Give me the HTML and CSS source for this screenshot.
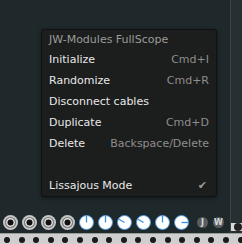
FILE: index.html
```html
<!DOCTYPE html>
<html lang="en">
<head>
  <meta charset="UTF-8" />
  <title>FullScope</title>
  <link rel="stylesheet" href="styles.css">
</head>
<body>
  <div class="rack">
    <div class="row">
      <div class="module">
        <div class="controls">
          <svg class="jack" viewBox="0 0 15 15"><circle cx="7.5" cy="7.5" r="7.5" fill="#c6c6c6"/><circle cx="7.5" cy="7.5" r="5.6" fill="#7c7c7c"/><circle cx="7.5" cy="7.5" r="4.4" fill="#e2e2e2"/><circle cx="7.5" cy="7.5" r="3" fill="#111"/></svg>
          <svg class="jack" viewBox="0 0 15 15"><circle cx="7.5" cy="7.5" r="7.5" fill="#c6c6c6"/><circle cx="7.5" cy="7.5" r="5.6" fill="#7c7c7c"/><circle cx="7.5" cy="7.5" r="4.4" fill="#e2e2e2"/><circle cx="7.5" cy="7.5" r="3" fill="#111"/></svg>
          <svg class="jack" viewBox="0 0 15 15"><circle cx="7.5" cy="7.5" r="7.5" fill="#c6c6c6"/><circle cx="7.5" cy="7.5" r="5.6" fill="#7c7c7c"/><circle cx="7.5" cy="7.5" r="4.4" fill="#e2e2e2"/><circle cx="7.5" cy="7.5" r="3" fill="#111"/></svg>
          <svg class="jack" viewBox="0 0 15 15"><circle cx="7.5" cy="7.5" r="7.5" fill="#c6c6c6"/><circle cx="7.5" cy="7.5" r="5.6" fill="#7c7c7c"/><circle cx="7.5" cy="7.5" r="4.4" fill="#e2e2e2"/><circle cx="7.5" cy="7.5" r="3" fill="#111"/></svg>
          <svg class="knob" viewBox="0 0 15 15"><circle cx="7.5" cy="7.5" r="7" fill="#fff" stroke="#4a9be8" stroke-width="0.9"/><line x1="7.5" y1="7.5" x2="7.5" y2="1" stroke="#3b8ee0" stroke-width="1.3"/></svg>
          <svg class="knob" viewBox="0 0 15 15"><circle cx="7.5" cy="7.5" r="7" fill="#fff" stroke="#4a9be8" stroke-width="0.9"/><line x1="7.5" y1="7.5" x2="7.5" y2="1" stroke="#3b8ee0" stroke-width="1.3"/></svg>
          <svg class="knob" viewBox="0 0 15 15"><circle cx="7.5" cy="7.5" r="7" fill="#fff" stroke="#4a9be8" stroke-width="0.9"/><line x1="7.5" y1="7.5" x2="2" y2="4.3" stroke="#3b8ee0" stroke-width="1.3"/></svg>
          <svg class="knob" viewBox="0 0 15 15"><circle cx="7.5" cy="7.5" r="7" fill="#fff" stroke="#4a9be8" stroke-width="0.9"/><line x1="7.5" y1="7.5" x2="2" y2="4.3" stroke="#3b8ee0" stroke-width="1.3"/></svg>
          <svg class="knob" viewBox="0 0 15 15"><circle cx="7.5" cy="7.5" r="7" fill="#fff" stroke="#4a9be8" stroke-width="0.9"/><line x1="7.5" y1="7.5" x2="7.5" y2="1" stroke="#3b8ee0" stroke-width="1.3"/></svg>
          <svg class="knob" viewBox="0 0 15 15"><circle cx="7.5" cy="7.5" r="7" fill="#fff" stroke="#4a9be8" stroke-width="0.9"/><line x1="7.5" y1="7.5" x2="14" y2="7.5" stroke="#3b8ee0" stroke-width="1.3"/></svg>
          <span class="badge first">J</span>
          <span class="badge">W</span>
        </div>

        <div class="menu">
          <div class="menu-title">JW-Modules FullScope</div>
          <div class="menu-item"><span>Initialize</span><span class="key">Cmd+I</span></div>
          <div class="menu-item"><span>Randomize</span><span class="key">Cmd+R</span></div>
          <div class="menu-item"><span>Disconnect cables</span></div>
          <div class="menu-item"><span>Duplicate</span><span class="key">Cmd+D</span></div>
          <div class="menu-item"><span>Delete</span><span class="key">Backspace/Delete</span></div>
          <div class="menu-item"></div>
          <div class="menu-item"><span>Lissajous Mode</span><span class="check">&#10004;</span></div>
        </div>
      </div>
      <div class="neighbor">
        <div class="neighbor-plate"><span class="neighbor-jack"></span></div>
      </div>
    </div>
    <div class="rail">
      <span class="hole"></span><span class="hole"></span><span class="hole"></span><span class="hole"></span>
      <span class="hole"></span><span class="hole"></span><span class="hole"></span><span class="hole"></span>
      <span class="hole"></span><span class="hole"></span><span class="hole"></span><span class="hole"></span>
      <span class="hole"></span><span class="hole"></span><span class="hole"></span><span class="hole"></span>
      <span class="hole"></span>
    </div>
  </div>
</body>
</html>
```

FILE: styles.css
```css
body {
  margin: 0;
  background: #1f292c;
  font-family: "DejaVu Sans", sans-serif;
  overflow: hidden;
}

.rack {
  width: 242px;
  height: 244px;
  display: flex;
  flex-direction: column;
}

.row {
  display: flex;
  height: 234px;
}

.module {
  position: relative;
  width: 233px;
  background: #1f292c;
  display: flex;
  flex-direction: column;
  justify-content: flex-end;
}

.controls {
  display: flex;
  align-items: center;
  gap: 4px;
  padding: 0 0 3px 3px;
}

.jack, .knob {
  width: 15px;
  height: 15px;
  display: block;
}

.badge {
  width: 11px;
  height: 11px;
  border-radius: 50%;
  background: #5a5d5e;
  color: #d8d8d8;
  font-size: 8px;
  font-weight: bold;
  line-height: 11px;
  text-align: center;
  margin-left: 1px;
}

.badge.first {
  margin-left: 4px;
}

.neighbor {
  flex: 1;
  background: #263033;
  border-left: 1px solid #3b4548;
  display: flex;
  flex-direction: column;
  justify-content: flex-end;
  padding-bottom: 2px;
}

.neighbor-plate {
  height: 8px;
  background: #d9d9d9;
  display: flex;
  align-items: center;
  padding-left: 3px;
}

.neighbor-jack {
  width: 8px;
  height: 8px;
  border-radius: 50%;
  background: #222;
}

.rail {
  height: 10px;
  background: #cfcfcf;
  border-top: 1px solid #9a9a9a;
  display: flex;
  align-items: center;
  gap: 8.6px;
  padding-left: 4px;
  overflow: hidden;
}

.hole {
  flex: none;
  width: 6px;
  height: 6px;
  border-radius: 50%;
  background: #1a1a1a;
  margin-top: 2px;
}

.menu {
  position: absolute;
  left: 41px;
  top: 29px;
  width: 176px;
  background: #1c1d1d;
  border: 1px solid #111;
  border-radius: 3px;
  box-shadow: 0 1px 4px rgba(0, 0, 0, 0.5);
  box-sizing: border-box;
  padding: 0 7px 0 7px;
  font-size: 11px;
}

.menu-title {
  height: 19px;
  line-height: 19px;
  color: #9b9b9b;
}

.menu-item {
  height: 21px;
  display: flex;
  align-items: center;
  justify-content: space-between;
  color: #e8e8e8;
}

.key {
  color: #8e8e8e;
}

.check {
  color: #9a9a9a;
  font-size: 11px;
  margin-right: 2px;
}
```
